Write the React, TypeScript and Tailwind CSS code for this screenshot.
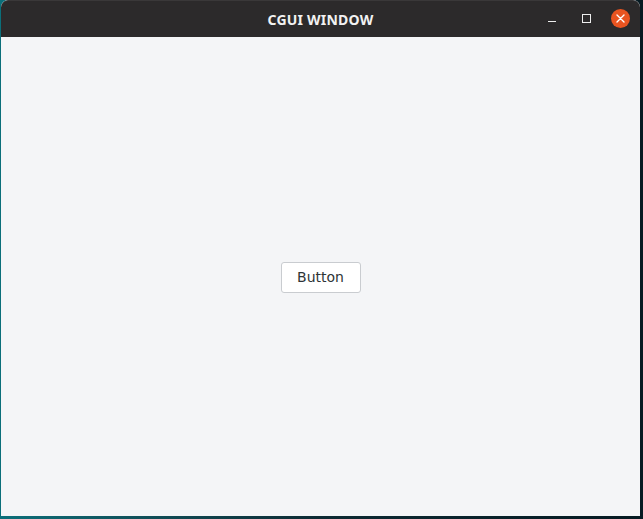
import React from 'react';

const App: React.FC = () => {
  return (
    <div className="w-[643px] h-[519px] overflow-hidden bg-gradient-to-r from-[#0b6f7a] via-[#0d2a33] to-[#061a22] pl-px">
      {/* Window */}
      <div className="flex flex-col w-[639px] h-[516px] rounded-t-[7px] overflow-hidden bg-[#f4f5f7]">
        {/* Title bar */}
        <div className="relative flex items-center justify-center h-[37px] shrink-0 bg-[#2c2a2b] border-t border-[#3a3839] rounded-t-[7px]">
          <span
            className="text-[14px] font-bold text-[#f2f2f2] tracking-[0.2px]"
            style={{ fontFamily: '"Noto Sans", "DejaVu Sans", sans-serif' }}
          >
            CGUI WINDOW
          </span>
          <div className="absolute right-[10px] top-0 h-full flex items-center">
            <div className="w-[34px] h-full flex items-center justify-center">
              <div className="w-[8px] h-px bg-[#eeeeee] mt-[4px]" />
            </div>
            <div className="w-[34px] h-full flex items-center justify-center">
              <div className="w-[9px] h-[9px] border border-[#eeeeee] -mt-[1px]" />
            </div>
            <div className="ml-[8px] w-[19px] h-[19px] rounded-full bg-[#e95420] flex items-center justify-center -mt-[1px]">
              <svg width="9" height="9" viewBox="0 0 9 9">
                <path d="M1 1 L8 8 M8 1 L1 8" stroke="#ffffff" strokeWidth="1.4" strokeLinecap="round" />
              </svg>
            </div>
          </div>
        </div>

        {/* Content */}
        <div className="flex-1 flex items-center justify-center">
          <button
            className="w-[80px] h-[31px] mt-[2px] rounded-[3px] border border-[#c9ccd0] bg-white text-[14px] text-[#2e3436]"
            style={{ fontFamily: '"DejaVu Sans", "Noto Sans", sans-serif' }}
          >
            Button
          </button>
        </div>
      </div>
    </div>
  );
};

export default App;
